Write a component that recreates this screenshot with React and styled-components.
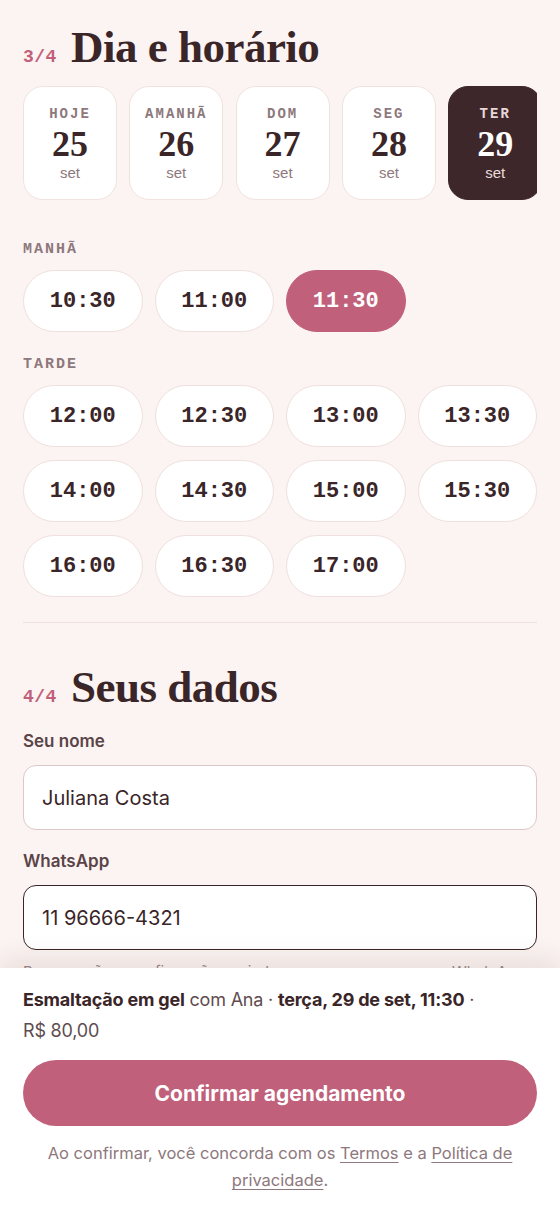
import React, { useState } from "react";
import styled, { createGlobalStyle } from "styled-components";

const GlobalStyle = createGlobalStyle`
  * { box-sizing: border-box; }
  html, body { margin: 0; padding: 0; background: #fcf4f2; }
  body { font-family: 'Inter', 'Noto Sans', sans-serif; color: #3a2528; }
`;

const Shell = styled.div`
  height: 1212px;
  display: flex;
  flex-direction: column;
  overflow: hidden;
  background: #fcf4f2;
`;

const Scroll = styled.main`
  flex: 1;
  overflow: hidden;
  padding: 23px 23px 0;
`;

const StepTitle = styled.h2`
  margin: 0;
  display: flex;
  align-items: baseline;
  gap: 14px;
  font-family: 'Liberation Serif', 'DejaVu Serif', serif;
  font-weight: 700;
  font-size: 45px;
  line-height: 48px;
  letter-spacing: -0.5px;
  color: #3a2528;
`;

const StepNum = styled.span`
  font-family: 'Liberation Mono', monospace;
  font-size: 18px;
  line-height: 20px;
  font-weight: 700;
  letter-spacing: 0.5px;
  color: #c1607a;
`;

const DateStrip = styled.div`
  display: flex;
  gap: 12.3px;
  margin-top: 15px;
  overflow: hidden;
`;

const DateCard = styled.button`
  flex: 0 0 94px;
  height: 114px;
  border-radius: 20px;
  border: 1px solid ${p => (p.$active ? "#3d272b" : "#f0e2df")};
  background: ${p => (p.$active ? "#3d272b" : "#ffffff")};
  display: flex;
  flex-direction: column;
  align-items: center;
  justify-content: center;
  padding: 0;
  cursor: pointer;
`;

const DayLabel = styled.span`
  font-family: 'Liberation Mono', monospace;
  font-weight: 700;
  font-size: 14px;
  letter-spacing: 2px;
  color: ${p => (p.$active ? "#e9d7d8" : "#8d787c")};
  line-height: 18px;
`;

const DayNum = styled.span`
  font-family: 'Liberation Serif', 'DejaVu Serif', serif;
  font-weight: 700;
  font-size: 36px;
  line-height: 36px;
  margin-top: 3px;
  color: ${p => (p.$active ? "#ffffff" : "#3a2528")};
`;

const Month = styled.span`
  font-size: 15px;
  line-height: 18px;
  margin-top: 2px;
  color: ${p => (p.$active ? "#ecdcdc" : "#8d787c")};
`;

const GroupLabel = styled.div`
  font-family: 'Liberation Mono', monospace;
  font-weight: 700;
  font-size: 15px;
  letter-spacing: 2px;
  color: #8d787c;
  margin: ${p => p.$first ? "40px" : "23px"} 0 10px;
  line-height: 20px;
`;

const TimeGrid = styled.div`
  display: grid;
  grid-template-columns: repeat(4, 1fr);
  gap: 13px 12px;
`;

const TimeChip = styled.button`
  height: 62px;
  border-radius: 31px;
  border: 1px solid ${p => (p.$active ? "#c1607a" : "#efe0dd")};
  background: ${p => (p.$active ? "#c1607a" : "#ffffff")};
  color: ${p => (p.$active ? "#ffffff" : "#3a2528")};
  font-family: 'Liberation Mono', monospace;
  font-weight: 700;
  font-size: 22px;
  cursor: pointer;
`;

const Divider = styled.hr`
  border: 0;
  border-top: 1.5px solid #ede0dd;
  margin: 25px 0 40px;
`;

const FieldLabel = styled.label`
  display: block;
  font-weight: 600;
  font-size: 17px;
  line-height: 22px;
  color: #5a4448;
  margin: ${p => p.$first ? "19px" : "20px"} 0 13px;
`;

const Input = styled.input`
  display: block;
  width: 100%;
  height: 65px;
  border-radius: 13px;
  border: ${p => (p.$focus ? "1.5px solid #3a2528" : "1px solid #dcc8c6")};
  background: #ffffff;
  padding: 0 18px;
  font-family: 'Inter', 'Noto Sans', sans-serif;
  font-size: 20px;
  color: #3a2528;
  outline: none;
`;

const Hint = styled.p`
  margin: 11px 0 0;
  font-size: 15px;
  line-height: 22px;
  color: #9b878a;
`;

const Footer = styled.footer`
  position: relative;
  z-index: 2;
  height: 244px;
  flex: 0 0 244px;
  background: #ffffff;
  box-shadow: 0 -10px 24px rgba(60, 30, 35, 0.09);
  padding: 16px 23px 0;
`;

const Summary = styled.p`
  margin: 0;
  font-size: 18px;
  line-height: 31px;
  letter-spacing: -0.2px;
  color: #5f4c50;
  b { font-weight: 700; color: #3a2528; }
`;

const Price = styled.span`
  white-space: nowrap;
`;

const ConfirmButton = styled.button`
  display: block;
  width: 100%;
  height: 66px;
  margin-top: 14px;
  border: 0;
  border-radius: 33px;
  background: #c1607a;
  color: #ffffff;
  font-family: 'Inter', 'Noto Sans', sans-serif;
  font-weight: 700;
  font-size: 21px;
  cursor: pointer;
`;

const Terms = styled.p`
  margin: 14px 10px 0;
  text-align: center;
  font-size: 16.5px;
  line-height: 27px;
  color: #8d787c;
  a { color: #8d787c; text-decoration: underline; text-underline-offset: 3px; }
`;

const days = [
  { label: "HOJE", num: 25 },
  { label: "AMANHÃ", num: 26 },
  { label: "DOM", num: 27 },
  { label: "SEG", num: 28 },
  { label: "TER", num: 29 },
];

const morning = ["10:30", "11:00", "11:30"];
const afternoon = ["12:00", "12:30", "13:00", "13:30", "14:00", "14:30", "15:00", "15:30", "16:00", "16:30", "17:00"];

export default function App() {
  const [day, setDay] = useState(29);
  const [time, setTime] = useState("11:30");

  return (
    <Shell>
      <GlobalStyle />
      <Scroll>
        <StepTitle><StepNum>3/4</StepNum>Dia e horário</StepTitle>
        <DateStrip>
          {days.map(d => (
            <DateCard key={d.num} $active={day === d.num} onClick={() => setDay(d.num)}>
              <DayLabel $active={day === d.num}>{d.label}</DayLabel>
              <DayNum $active={day === d.num}>{d.num}</DayNum>
              <Month $active={day === d.num}>set</Month>
            </DateCard>
          ))}
        </DateStrip>

        <GroupLabel $first>MANHÃ</GroupLabel>
        <TimeGrid>
          {morning.map(t => (
            <TimeChip key={t} $active={time === t} onClick={() => setTime(t)}>{t}</TimeChip>
          ))}
        </TimeGrid>

        <GroupLabel>TARDE</GroupLabel>
        <TimeGrid>
          {afternoon.map(t => (
            <TimeChip key={t} $active={time === t} onClick={() => setTime(t)}>{t}</TimeChip>
          ))}
        </TimeGrid>

        <Divider />

        <StepTitle><StepNum>4/4</StepNum>Seus dados</StepTitle>
        <FieldLabel $first>Seu nome</FieldLabel>
        <Input defaultValue="Juliana Costa" />
        <FieldLabel>WhatsApp</FieldLabel>
        <Input $focus defaultValue="11 96666-4321" />
        <Hint>Remarcação e confirmação enviadas por mensagem no seu WhatsApp.</Hint>
      </Scroll>

      <Footer>
        <Summary>
          <b>Esmaltação em gel</b> com Ana · <b>terça, 29 de set, 11:30</b> · <Price>R$ 80,00</Price>
        </Summary>
        <ConfirmButton>Confirmar agendamento</ConfirmButton>
        <Terms>
          Ao confirmar, você concorda com os <a href="#">Termos</a> e a <a href="#">Política de privacidade</a>.
        </Terms>
      </Footer>
    </Shell>
  );
}
